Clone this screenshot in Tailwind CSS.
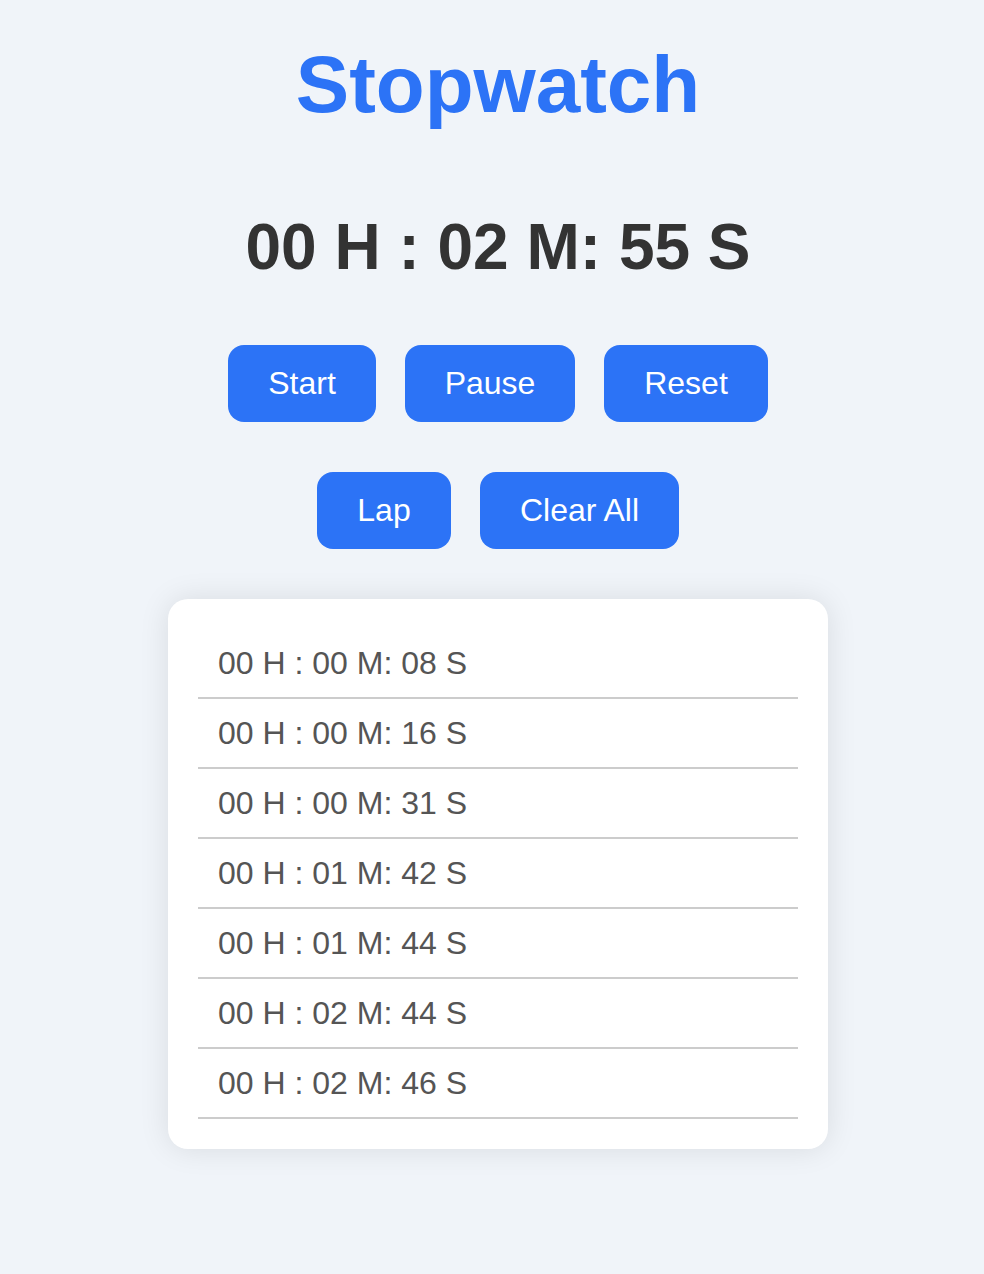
<!DOCTYPE html>
<html lang="en">
<head>
<meta charset="utf-8">
<title>Stopwatch</title>
<script src="https://cdn.jsdelivr.net/npm/@tailwindcss/browser@4"></script>
</head>
<body class="bg-[#f0f4f9] min-h-screen overflow-hidden font-['Liberation_Sans',Arial,sans-serif] antialiased">
<main class="flex flex-col items-center pl-3 pt-[39px]">
  <h1 class="text-[80px] leading-[92px] font-bold text-[#2c73f6]">Stopwatch</h1>
  <div class="mt-[79px] text-[64px] leading-[74px] font-bold text-[#333] whitespace-nowrap">00 H : 02 M: 55 S</div>
  <div class="mt-[61px] flex gap-[29px]">
    <button class="h-[77px] w-[148px] rounded-2xl bg-[#2c73f6] pb-0.5 text-[32px] text-white">Start</button>
    <button class="h-[77px] w-[170px] rounded-2xl bg-[#2c73f6] pb-0.5 text-[32px] text-white">Pause</button>
    <button class="h-[77px] w-[164px] rounded-2xl bg-[#2c73f6] pb-0.5 text-[32px] text-white">Reset</button>
  </div>
  <div class="mt-[50px] flex gap-[29px]">
    <button class="h-[77px] w-[134px] rounded-2xl bg-[#2c73f6] pb-0.5 text-[32px] text-white">Lap</button>
    <button class="h-[77px] w-[199px] rounded-2xl bg-[#2c73f6] pb-0.5 text-[32px] text-white">Clear All</button>
  </div>
  <ul class="mt-[50px] w-[660px] h-[550px] rounded-[20px] bg-white p-[30px] shadow-[0_0_30px_rgba(0,0,0,0.1)] text-[32px] leading-[36px] text-[#555]">
    <li class="h-[70px] border-b-2 border-[#ccc] px-5 pt-4">00 H : 00 M: 08 S</li>
    <li class="h-[70px] border-b-2 border-[#ccc] px-5 pt-4">00 H : 00 M: 16 S</li>
    <li class="h-[70px] border-b-2 border-[#ccc] px-5 pt-4">00 H : 00 M: 31 S</li>
    <li class="h-[70px] border-b-2 border-[#ccc] px-5 pt-4">00 H : 01 M: 42 S</li>
    <li class="h-[70px] border-b-2 border-[#ccc] px-5 pt-4">00 H : 01 M: 44 S</li>
    <li class="h-[70px] border-b-2 border-[#ccc] px-5 pt-4">00 H : 02 M: 44 S</li>
    <li class="h-[70px] border-b-2 border-[#ccc] px-5 pt-4">00 H : 02 M: 46 S</li>
  </ul>
</main>
</body>
</html>
